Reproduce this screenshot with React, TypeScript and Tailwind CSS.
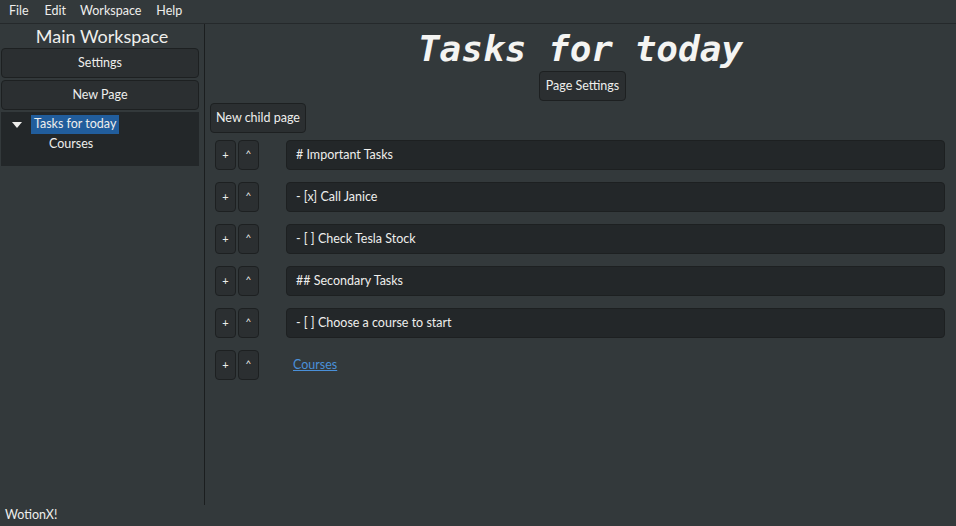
import React from "react"

const rows = [
  { text: "# Important Tasks" },
  { text: "- [x] Call Janice" },
  { text: "- [ ] Check Tesla Stock" },
  { text: "## Secondary Tasks" },
  { text: "- [ ] Choose a course to start" },
  { text: "Courses", link: true },
]

const btn =
  "bg-[#2b2f31] border border-[#1d2021] rounded-[4px] text-[#eeeeec] flex items-center justify-center"

export default function App() {
  return (
    <div
      className="w-[956px] h-[526px] flex flex-col bg-[#33393b] text-[#eeeeec] text-[12.5px] overflow-hidden"
      style={{ fontFamily: "Lato, 'Noto Sans', sans-serif" }}
    >
      {/* menu bar */}
      <div className="h-[24px] flex items-center border-b border-[#25292b] shrink-0">
        <span className="ml-[9px]">File</span>
        <span className="ml-[16px]">Edit</span>
        <span className="ml-[14px]">Workspace</span>
        <span className="ml-[15px]">Help</span>
      </div>

      <div className="flex flex-1 min-h-0">
        {/* sidebar */}
        <div className="w-[205px] border-r border-[#1b1e1f] flex flex-col px-[1px] shrink-0">
          <div className="h-[24px] flex items-center justify-center text-[18px] leading-none">
            Main Workspace
          </div>
          <button className={`${btn} h-[30px] w-[198px]`}>Settings</button>
          <button className={`${btn} h-[30px] w-[198px] mt-[2px]`}>New Page</button>
          <div className="w-[198px] h-[54px] mt-[2px] bg-[#232729] pt-[3px]">
            <div className="flex items-center h-[19px]">
              <svg width="10" height="6" viewBox="0 0 10 6" className="ml-[11px] mr-[9px]">
                <polygon points="0,0 10,0 5,6" fill="#eeeeec" />
              </svg>
              <span className="bg-[#215d9c] px-[3px] h-[19px] flex items-center">Tasks for today</span>
            </div>
            <div className="h-[20px] flex items-center pl-[48px]">Courses</div>
          </div>
        </div>

        {/* main */}
        <div className="flex-1 flex flex-col">
          <div
            className="h-[47px] pt-[2px] flex items-center justify-center text-[36px] italic font-semibold text-[#f4f4f2]"
            style={{ fontFamily: "'DejaVu Sans Mono', monospace" }}
          >
            Tasks for today
          </div>
          <div className="flex justify-center pl-[4px]">
            <button className={`${btn} h-[30px] px-[6px]`}>Page Settings</button>
          </div>
          <div className="pl-[5px] mt-[2px]">
            <button className={`${btn} h-[30px] px-[5px]`}>New child page</button>
          </div>
          <div className="flex flex-col gap-[12px] mt-[7px] pl-[10px] pr-[11px]">
            {rows.map((r, i) => (
              <div key={i} className="flex items-center h-[30px]">
                <button className={`${btn} w-[21px] h-[30px] text-[11px]`}>+</button>
                <button className={`${btn} w-[21px] h-[30px] text-[10px] ml-[2px] items-start pt-[5px]`}>^</button>
                {r.link ? (
                  <div className="ml-[34px] text-[#4a90d9] underline">{r.text}</div>
                ) : (
                  <div className="ml-[27px] flex-1 h-[30px] bg-[#232729] border border-[#1d2021] rounded-[4px] flex items-center px-[9px]">
                    {r.text}
                  </div>
                )}
              </div>
            ))}
          </div>
        </div>
      </div>

      {/* status bar */}
      <div className="h-[21px] flex items-center pl-[5px] shrink-0">WotionX!</div>
    </div>
  )
}
